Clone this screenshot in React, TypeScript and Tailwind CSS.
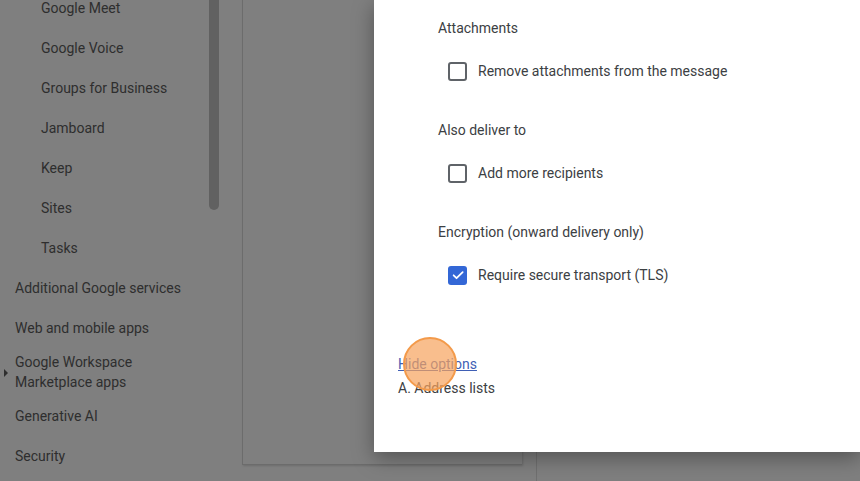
import React from "react";

const font = { fontFamily: "Roboto, 'Noto Sans', Arial, sans-serif" };

function Box({ checked }: { checked?: boolean }) {
  if (checked) {
    return (
      <span className="w-[19px] h-[19px] rounded-[3px] bg-[#3367d6] flex items-center justify-center shrink-0">
        <svg width="14" height="14" viewBox="0 0 24 24">
          <path d="M4.5 12.5l5 5L20 7" fill="none" stroke="#fff" strokeWidth="3" strokeLinecap="round" strokeLinejoin="round" />
        </svg>
      </span>
    );
  }
  return <span className="w-[19px] h-[19px] rounded-[3px] border-2 border-[#5f6368] shrink-0" />;
}

function Row({ label, checked }: { label: string; checked?: boolean }) {
  return (
    <div className="flex items-center gap-[11px] ml-[10px] h-[18px]">
      <Box checked={checked} />
      <span className="text-[14px] leading-[20px] text-[#3c4043]">{label}</span>
    </div>
  );
}

export default function App() {
  const sub = ["Google Meet", "Google Voice", "Groups for Business", "Jamboard", "Keep", "Sites", "Tasks"];
  return (
    <div className="relative w-[860px] h-[481px] overflow-hidden bg-[#7f7f7f] flex" style={font}>
      <aside className="relative w-[242px] shrink-0">
        <ul className="-mt-[12px] text-[14px] text-[#2e2e2e]">
          {sub.map((s) => (
            <li key={s} className="h-[40px] flex items-center pl-[41px]">{s}</li>
          ))}
          <li className="h-[40px] flex items-center pl-[15px]">Additional Google services</li>
          <li className="h-[40px] flex items-center pl-[15px]">Web and mobile apps</li>
          <li className="relative h-[48px] flex items-center pl-[15px] leading-[20px]">
            <span className="absolute left-[4px] top-[21px] w-0 h-0 border-y-[4px] border-y-transparent border-l-[4px] border-l-[#2e2e2e]" />
            <span>Google Workspace<br />Marketplace apps</span>
          </li>
          <li className="h-[40px] flex items-center pl-[15px]">Generative AI</li>
          <li className="h-[40px] flex items-center pl-[15px]">Security</li>
        </ul>
        <div className="absolute left-[209px] top-0 w-[10px] h-[210px] rounded-b-full bg-[#616161]" />
      </aside>
      <div className="w-[280px] h-[465px] border-l border-b border-[#6c6c6c] shadow-[1px_1px_2px_rgba(0,0,0,0.15)] shrink-0" />
      <div className="w-[14px] shrink-0" />
      <div className="w-px h-full bg-[#707070]" />

      <div className="absolute left-[374px] top-0 w-[486px] h-[452px] bg-white shadow-[0_6px_20px_rgba(0,0,0,0.35)]">
        <div className="pl-[64px] pt-[18px] text-[14px] leading-[20px] text-[#3c4043]">
          <div>Attachments</div>
          <div className="mt-[24px]"><Row label="Remove attachments from the message" /></div>
          <div className="mt-[40px]">Also deliver to</div>
          <div className="mt-[24px]"><Row label="Add more recipients" /></div>
          <div className="mt-[40px]">Encryption (onward delivery only)</div>
          <div className="mt-[24px]"><Row label="Require secure transport (TLS)" checked /></div>
        </div>
        <div className="pl-[24px] mt-[70px] text-[14px] leading-[20px]">
          <div className="relative">
            <a className="text-[#3f5fb5] underline">Hide options</a>
            <span className="absolute left-[5px] top-[-17px] w-[54px] h-[54px] rounded-full bg-[#f7a35c]/70 border-2 border-[#f39a4a]" />
          </div>
          <div className="mt-[4px] text-[#3c4043]">A. Address lists</div>
        </div>
      </div>
    </div>
  );
}
